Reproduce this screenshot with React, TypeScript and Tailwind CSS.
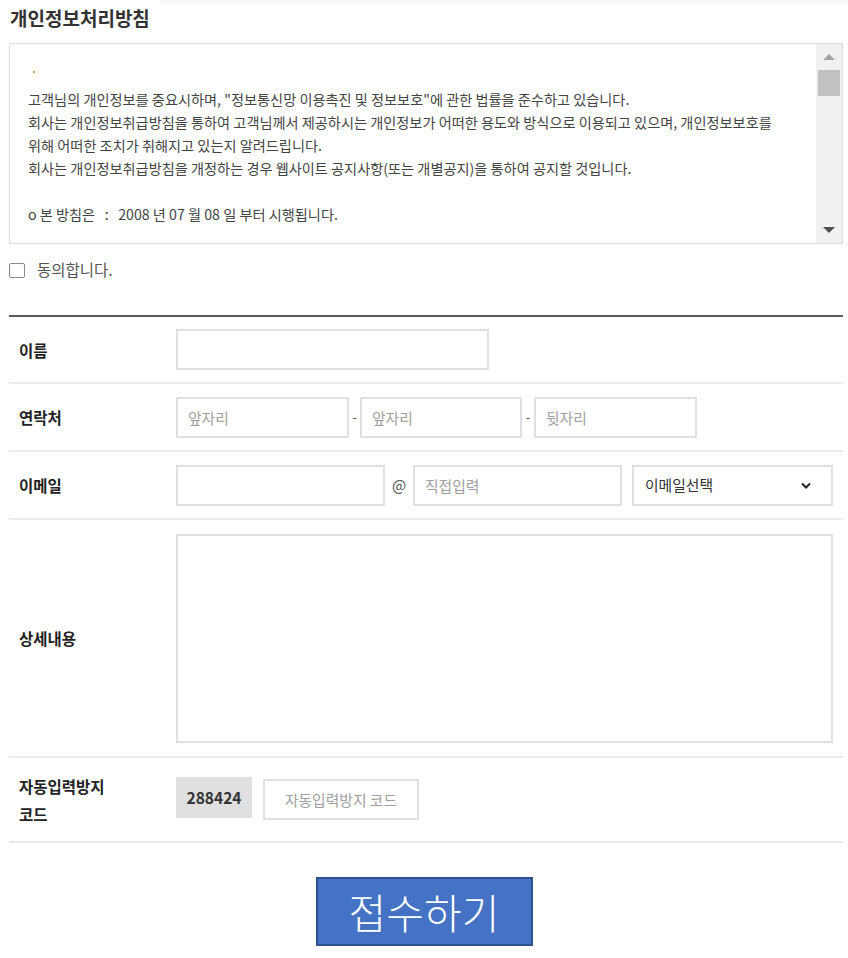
import React from "react";

const Label = ({ children }: { children: React.ReactNode }) => (
  <div className="w-[167px] shrink-0 pl-[10px] text-[15.5px] font-bold text-[#222] leading-[28px]">{children}</div>
);

const inputCls =
  "h-[41px] border-2 border-[#e0e0e0] bg-white px-[10px] text-[14.8px] text-[#333] outline-none placeholder:text-[#a0a0a0]";

const App = () => {
  return (
    <div className="w-[848px] min-h-[958px] bg-white font-['Noto_Sans_CJK_KR',sans-serif] text-[#444]">
      {/* faint top shadow */}
      <div className="ml-[160px] h-[5px] bg-gradient-to-b from-[#f2f2f2] to-white"></div>

      <div className="pl-[9px] pr-[5px]">
        <h2 className="mt-[1px] h-[24px] pl-[1px] text-[19px] font-semibold leading-[24px] text-[#333]">개인정보처리방침</h2>

        {/* Policy box */}
        <div className="mt-[13px] flex h-[201px] border border-[#dcdcdc]">
          <div className="flex-1 overflow-hidden pl-[18px] pt-[21px] text-[14.2px] leading-[23px] text-[#444] whitespace-pre">
            <div className="h-[23px] pt-[6px]">
              <div className="ml-[5px] h-[2px] w-[2px] bg-[#d4a24c]"></div>
            </div>
            <div>고객님의 개인정보를 중요시하며, "정보통신망 이용촉진 및 정보보호"에 관한 법률을 준수하고 있습니다.</div>
            <div>회사는 개인정보취급방침을 통하여 고객님께서 제공하시는 개인정보가 어떠한 용도와 방식으로 이용되고 있으며, 개인정보보호를</div>
            <div>위해 어떠한 조치가 취해지고 있는지 알려드립니다.</div>
            <div>회사는 개인정보취급방침을 개정하는 경우 웹사이트 공지사항(또는 개별공지)을 통하여 공지할 것입니다.</div>
            <div className="h-[23px]"></div>
            <div>o 본 방침은   :   2008 년 07 월 08 일 부터 시행됩니다.</div>
          </div>
          {/* scrollbar */}
          <div className="flex w-[26px] flex-col bg-[#f1f1f1]">
            <div className="flex h-[26px] items-center justify-center">
              <div className="h-0 w-0 border-x-[6px] border-b-[6px] border-x-transparent border-b-[#a3a3a3]"></div>
            </div>
            <div className="mx-[2px] h-[26px] bg-[#c1c1c1]"></div>
            <div className="flex-1"></div>
            <div className="flex h-[26px] items-center justify-center">
              <div className="h-0 w-0 border-x-[6px] border-t-[6px] border-x-transparent border-t-[#505050]"></div>
            </div>
          </div>
        </div>

        {/* Agree */}
        <label className="mt-[18px] flex h-[16px] items-center gap-[12px]">
          <span className="h-[15px] w-[16px] rounded-[2px] border-[1.5px] border-[#8a8a8a] bg-white"></span>
          <span className="text-[15.5px] text-[#555]">동의합니다.</span>
        </label>

        {/* Form */}
        <div className="mt-[37px] border-t-2 border-[#5a5a5a]">
          <div className="flex h-[67px] items-center border-b-2 border-[#ebebeb]">
            <Label>이름</Label>
            <input className={`${inputCls} w-[313px]`} />
          </div>

          <div className="flex h-[68px] items-center border-b-2 border-[#ebebeb]">
            <Label>연락처</Label>
            <input className={`${inputCls} w-[173px]`} placeholder="앞자리" />
            <span className="w-[11px] text-center text-[13px] text-[#555]">-</span>
            <input className={`${inputCls} w-[162px]`} placeholder="앞자리" />
            <span className="w-[12px] text-center text-[13px] text-[#555]">-</span>
            <input className={`${inputCls} w-[163px]`} placeholder="뒷자리" />
          </div>

          <div className="flex h-[68px] items-center border-b-2 border-[#ebebeb]">
            <Label>이메일</Label>
            <input className={`${inputCls} w-[209px]`} />
            <span className="w-[28px] text-center text-[15px] text-[#555]">@</span>
            <input className={`${inputCls} w-[209px]`} placeholder="직접입력" />
            <div className="ml-[10px] flex h-[41px] w-[201px] items-center justify-between border-2 border-[#e0e0e0] pl-[11px] pr-[20px] text-[14.8px] text-[#333]">
              <span>이메일선택</span>
              <svg width="10" height="7" viewBox="0 0 10 7" fill="none">
                <polyline points="1,1.5 5,5.5 9,1.5" stroke="#222" strokeWidth="2" />
              </svg>
            </div>
          </div>

          <div className="flex h-[238px] items-center border-b-2 border-[#ebebeb]">
            <Label>상세내용</Label>
            <textarea className="h-[209px] w-[657px] resize-none border-2 border-[#e0e0e0] p-[10px] text-[14px] outline-none"></textarea>
          </div>

          <div className="flex h-[85px] items-center border-b-2 border-[#ebebeb]">
            <Label>
              자동입력방지
              <br />
              코드
            </Label>
            <div className="mb-[4px] flex h-[41px] w-[76px] items-center justify-center bg-[#e0e0e0] text-[15.5px] font-bold text-[#333]">
              288424
            </div>
            <input
              className={`${inputCls} ml-[11px] w-[156px] text-center`}
              placeholder="자동입력방지 코드"
            />
          </div>
        </div>
      </div>

      {/* Submit */}
      <div className="mt-[34px] flex justify-center">
        <button className="h-[69px] w-[217px] border-2 border-[#2f528f] bg-[#4472c4] text-[41px] font-light leading-none text-white">
          접수하기
        </button>
      </div>
    </div>
  );
};

export default App;
